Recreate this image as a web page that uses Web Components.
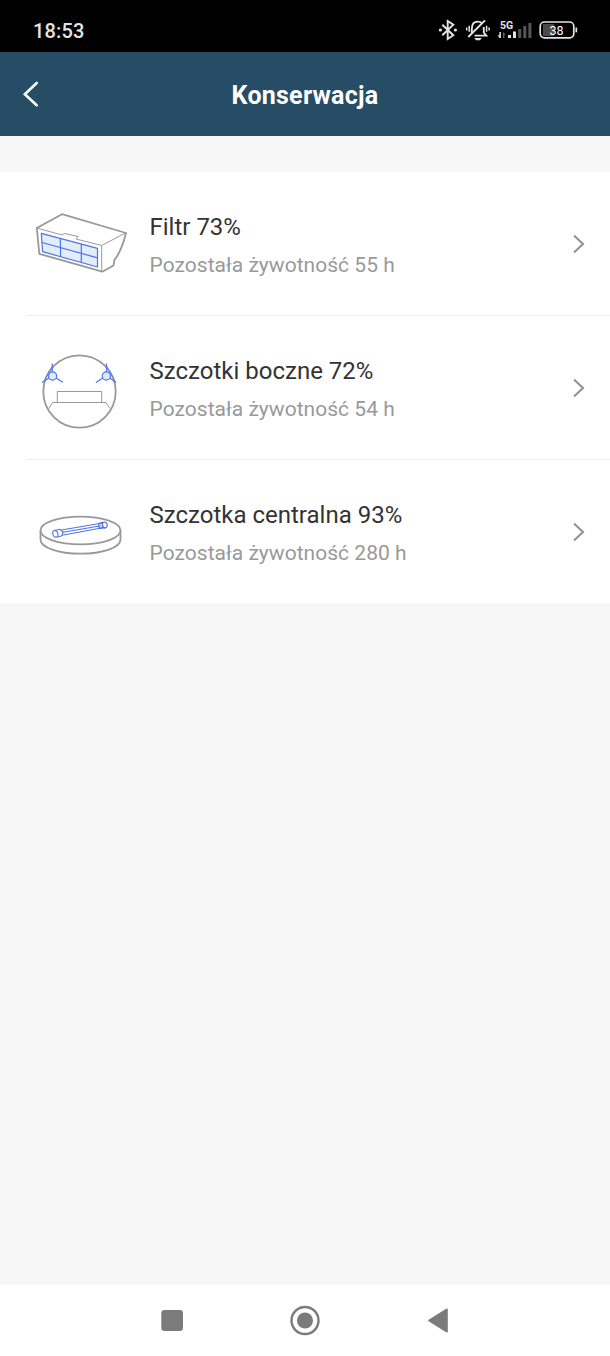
<!DOCTYPE html>
<html lang="pl">
<head>
<meta charset="utf-8">
<title>Konserwacja</title>
<style>
html,body{margin:0;height:100%}
body{font-family:Roboto,"Liberation Sans",sans-serif;background:#f7f7f7}
</style>
</head>
<body>
<maintenance-app></maintenance-app>
<script>
const define = (name, html) => {
  const t = document.createElement('template');
  t.innerHTML = html;
  customElements.define(name, class extends HTMLElement {
    constructor() {
      super();
      this.attachShadow({mode: 'open'}).append(t.content.cloneNode(true));
    }
  });
};

define('status-bar', `
<style>
:host{display:flex;box-sizing:border-box;height:52px;background:#000;color:#e4e4e4;justify-content:space-between;align-items:flex-start;padding:10px 30px 0 33px}
.time{font-size:20px;line-height:42px;height:42px;letter-spacing:.15px;font-weight:500}
svg{display:block}
text{font-family:Roboto,sans-serif}
</style>
<span class="time">18:53</span>
<svg width="150" height="40" viewBox="430 10 150 40" fill="none" stroke="#e4e4e4" stroke-width="1.9">
  <path d="M442.3 24.7 L453.3 35.2 L447.7 39 V21 L453.3 24.7 L442.3 35.2"/>
  <g fill="#e4e4e4" stroke="none"><circle cx="440.4" cy="30" r="1.6"/><circle cx="455.4" cy="30" r="1.6"/></g>
  <path d="M471.8 33 V29 C471.8 24 474 21.6 477.8 21.6 C479.6 21.6 481 22.2 482 23.2 M483.8 27 V32.5 L486.3 35.6 H474.5"/>
  <path d="M468.3 37 L485 20.4" stroke-width="1.9"/>
  <path d="M474.2 38 H481.8 L480 40.2 H476 Z" fill="#e4e4e4" stroke="none"/>
  <path d="M469.2 25.8 V31.8 M466.7 27.4 V30.6 M486.6 25.8 V31.8 M489.1 27.4 V30.6" stroke-width="1.5"/>
  <text x="500" y="28.6" font-size="10.5" font-weight="700" fill="#e4e4e4" stroke="none">5G</text>
  <g stroke="none" fill="#e4e4e4">
    <path d="M499.4 32h1.5v6h-1.5l-1.7-2.8h1.7z"/><path d="M503 32l2.6 2.4h-1.2v3.6h-1.4z" fill="#666"/>
    <rect x="508" y="35" width="3" height="3"/><rect x="513" y="31.5" width="3" height="6.5"/>
    <g fill="#555"><rect x="518.2" y="29" width="3" height="9"/><rect x="523.3" y="26" width="3" height="12"/><rect x="528.4" y="23" width="3" height="15"/></g>
  </g>
  <rect x="543" y="24" width="11" height="12" fill="#4a4a4a" stroke="none"/>
  <rect x="540.2" y="22" width="33.6" height="15.8" rx="4.2" stroke-width="1.7"/>
  <path d="M576.3 27.5 V32.3" stroke-width="1.7"/>
  <text x="549.4" y="34.9" font-size="12.5" font-weight="400" fill="#fff" stroke="none">38</text>
</svg>`);

define('title-bar', `
<style>
:host{display:grid;grid-template-columns:60px 1fr 60px;align-items:center;height:84px;background:#274c66;color:#fff}
svg{display:block;margin-left:20px}
h1{margin:0;text-align:center;font-size:25px;line-height:30px;font-weight:700;padding-top:3px;letter-spacing:.25px}
</style>
<svg width="24" height="32" viewBox="20 78 24 32" fill="none" stroke="#fff" stroke-width="2.6" stroke-linecap="round"><path d="M36.7 83 L24.8 94.3 L36.7 105.3"/></svg>
<h1><slot></slot></h1>`);

define('supply-row', `
<style>
:host{display:flex;box-sizing:border-box;height:144px;align-items:flex-start;background:#fff;padding-right:20px}
:host(:last-of-type){height:143px}
.icon{width:149.5px;flex:none}
.copy{flex:1;padding-top:40px;white-space:nowrap}
.name{font-size:24px;line-height:30px;color:#333}
.life{font-size:21px;line-height:28px;color:#999;margin-top:9px;letter-spacing:.03px}
svg{display:block;margin-top:58px}
</style>
<div class="icon"><slot name="icon"></slot></div>
<div class="copy"><div class="name"><slot name="name"></slot></div><div class="life"><slot></slot></div></div>
<svg width="24" height="28" viewBox="566 230 24 28" fill="none" stroke="#8f8f8f" stroke-width="2"><path d="M574 235.5 L583 244 L574 252.5"/></svg>`);

define('row-divider', `
<style>:host{display:block;height:1px;margin:-1px 0 0 26px;background:#ededed;position:relative}</style>`);

const art = (name, y, inner) => define(name, `
<style>:host,svg{display:block}</style>
<svg width="149" height="143" viewBox="0 ${y} 149 143" fill="none" stroke="#999" stroke-width="1.8" stroke-linejoin="round">${inner}</svg>`);

art('filter-icon', 172, `
  <path d="M36.8 228 L62 214.2 L126 233 C124 242 119 255 114.5 259.7 L113.5 265.5 L102.3 271.7 L39.3 253.8 Z"/>
  <path stroke-width="1" d="M36.8 228 L62 235 L64.5 233.5 L78.3 236.5 L76 239 L101.7 245.5 V271 M101.7 245.5 L125.5 233"/>
  <path d="M41.3 233.3 L97.5 248.3 V267 L42.6 251.7 Z" fill="#e2ecfc" stroke="#4f74e3" stroke-width="1.2"/>
  <path d="M42 242.5 L97.5 257.8 M60.3 238.4 L60.6 256.7 M81.3 244 V262.5" stroke="#4f74e3" stroke-width="1.2"/>`);
art('side-brush-icon', 316, `
  <circle cx="79.5" cy="391.5" r="36.2"/>
  <path stroke-width="1" d="M57.3 402.5 V391.5 H101.7 V402.5 M49 408.5 L52.5 402.5 H105.8 L110 408.5"/>
  <g stroke="#4f74e3" stroke-width="1.2"><path d="M52.3 363.5 V372 M49 378 L42 382.5 M56 378 L63 382.3 M106.5 363.5 V372 M102.8 378 L96 382.5 M110 378 L116 382.5"/><path d="M52.3 366 L44 381 M106.5 366 L115 381" stroke-width=".8"/><circle cx="52.6" cy="376" r="4.1" fill="#dceafc"/><circle cx="106.3" cy="376" r="4.1" fill="#dceafc"/></g>`);
art('main-brush-icon', 460, `
  <ellipse cx="80.5" cy="530.5" rx="40" ry="13.9"/>
  <path d="M40.5 530.5 V539.5 C40.5 547.4 58.4 553.7 80.5 553.7 C102.6 553.7 120.5 547.4 120.5 539.5 V530.5"/>
  <g stroke="#4f74e3" stroke-width="1.1"><path d="M61.5 530 L99.5 523.5 M63 532.3 L101 525.8 M62.2 535.2 L102.5 527.7"/><path d="M54.5 530.5 L60 529.3 L63 532 L62 535.7 L56.7 537.2"/><ellipse cx="55.3" cy="533.8" rx="2.5" ry="3.4" transform="rotate(-18 55.3 533.8)"/><path d="M98.5 523.5 L103.5 522 M101.5 528.2 L105.8 527.7"/><ellipse cx="104.8" cy="525" rx="2.4" ry="2.9" transform="rotate(-18 104.8 525)"/><ellipse cx="100.7" cy="525.8" rx="2" ry="2.6"/></g>`);

define('system-nav', `
<style>:host{display:flex;justify-content:center;height:71px;background:#fff}svg{display:block}</style>
<svg width="610" height="71" viewBox="0 1285 610 71" fill="#7b7b7b">
  <rect x="161.3" y="1310" width="21.7" height="21" rx="3.2"/>
  <circle cx="305" cy="1320.5" r="13.5" fill="none" stroke="#7b7b7b" stroke-width="2.4"/><circle cx="305" cy="1320.5" r="8"/>
  <path d="M429 1320.5 L447 1309.3 V1331.7 Z" stroke="#7b7b7b" stroke-width="1.6" stroke-linejoin="round"/>
</svg>`);

define('maintenance-app', `
<style>
:host{display:flex;flex-direction:column;height:1356px;width:610px;background:#f7f7f7}
main{flex:1;padding-top:36px}
</style>
<status-bar></status-bar>
<title-bar>Konserwacja</title-bar>
<main>
<supply-row><filter-icon slot="icon"></filter-icon><span slot="name">Filtr 73%</span>Pozostała żywotność 55 h</supply-row>
<row-divider></row-divider>
<supply-row><side-brush-icon slot="icon"></side-brush-icon><span slot="name">Szczotki boczne 72%</span>Pozostała żywotność 54 h</supply-row>
<row-divider></row-divider>
<supply-row><main-brush-icon slot="icon"></main-brush-icon><span slot="name">Szczotka centralna 93%</span>Pozostała żywotność 280 h</supply-row>
</main>
<system-nav></system-nav>`);
</script>
</body>
</html>
